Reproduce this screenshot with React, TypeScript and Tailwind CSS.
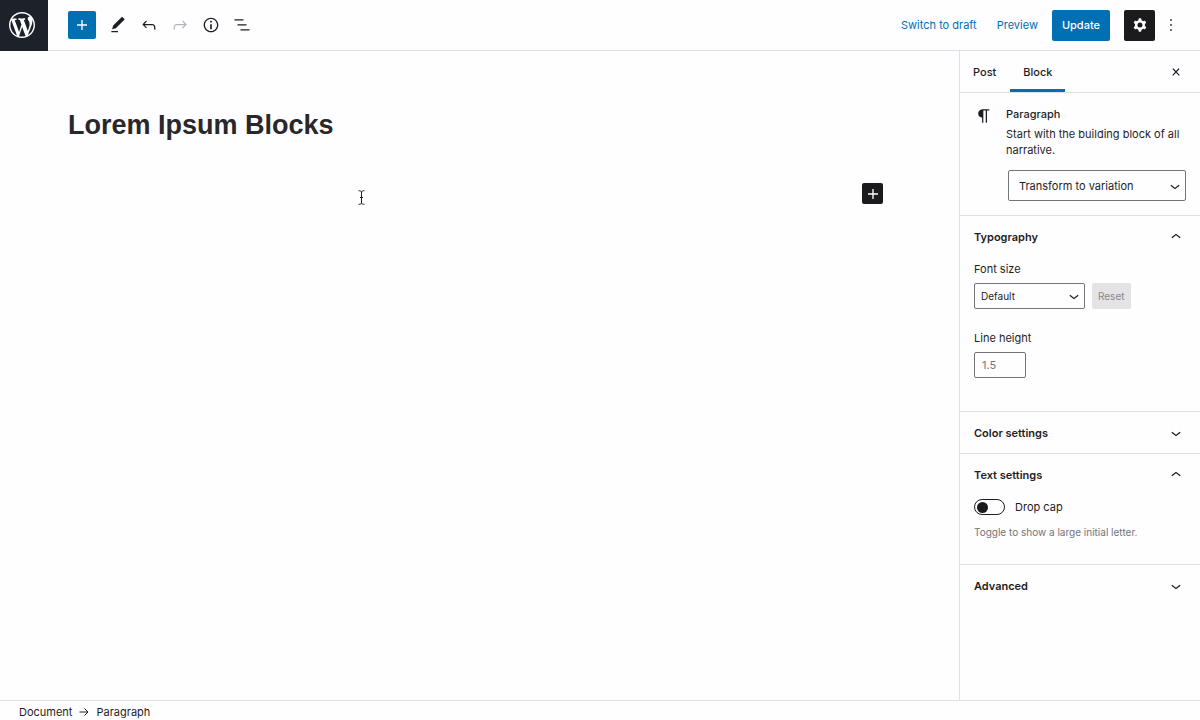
import { useState, type ReactNode } from "react";

const icons = {
  plus: "M18 11.2h-5.2V6h-1.6v5.2H6v1.6h5.2V18h1.6v-5.2H18z",
  edit: "M20.1 5.1L16.9 2 6.2 12.7l-1.3 4.4 4.5-1.3L20.1 5.1zM4 20.8h8v-1.5H4v1.5z",
  undo: "M18.3 11.7c-.6-.6-1.4-.9-2.3-.9H6.7l2.9-3.3-1.1-1-4.5 5L8.5 16l1-1-2.7-2.7H16c.5 0 .9.2 1.3.5 1 1 1 3.4 1 4.5v.3h1.5v-.2c0-1.5 0-4.3-1.5-5.7z",
  redo: "M15.6 6.5l-1.1 1 2.9 3.3H8c-.9 0-1.7.3-2.3.9-1.4 1.5-1.4 4.2-1.4 5.6v.2h1.5v-.3c0-1.1 0-3.5 1-4.5.3-.3.7-.5 1.3-.5h9.2L14.5 15l1.1 1.1 4.6-4.6-4.6-5z",
  info: "M12 3.2c-4.8 0-8.8 3.9-8.8 8.8 0 4.8 3.9 8.8 8.8 8.8 4.8 0 8.8-3.9 8.8-8.8 0-4.8-4-8.8-8.8-8.8zm0 16c-4 0-7.2-3.3-7.2-7.2C4.8 8 8 4.8 12 4.8s7.2 3.3 7.2 7.2c0 4-3.2 7.2-7.2 7.2zM11 17h2v-6h-2v6zm0-8h2V7h-2v2z",
  listView: "M13.8 5.2H3v1.5h10.8V5.2zm-3.6 12v1.5H21v-1.5H10.2zm7.2-6H6.6v1.5h10.8v-1.5z",
  cog: "M10.289 4.836A1 1 0 0111.275 4h1.306a1 1 0 01.987.836l.244 1.466c.787.26 1.503.679 2.108 1.218l1.393-.522a1 1 0 011.216.437l.653 1.13a1 1 0 01-.23 1.273l-1.148.944a6.025 6.025 0 010 2.435l1.149.946a1 1 0 01.23 1.272l-.653 1.13a1 1 0 01-1.216.437l-1.394-.522c-.605.54-1.32.958-2.108 1.218l-.244 1.466a1 1 0 01-.987.836h-1.306a1 1 0 01-.986-.836l-.244-1.466a5.995 5.995 0 01-2.108-1.218l-1.394.522a1 1 0 01-1.217-.436l-.653-1.131a1 1 0 01.23-1.272l1.149-.946a6.026 6.026 0 010-2.435l-1.148-.944a1 1 0 01-.23-1.272l.653-1.131a1 1 0 011.217-.437l1.393.522a5.994 5.994 0 012.108-1.218l.244-1.466zM14.929 12a3 3 0 11-6 0 3 3 0 016 0z",
  more: "M13 19h-2v-2h2v2zm0-6h-2v-2h2v2zm0-6h-2V5h2v2z",
  close: "M13 11.9l3.3-3.4-1.1-1-3.2 3.3-3.2-3.3-1.1 1 3.3 3.4-3.5 3.6 1 1L12 13l3.5 3.5 1-1z",
  paragraph: "M18.3 4H9.9v-.1l-.9.2c-2.3.4-4 2.4-4 4.8s1.7 4.4 4 4.8l.7.1V20h1.5V5.5h2.9V20h1.5V5.5h2.7V4z",
  down: "M17.5 11.6L12 16l-5.5-4.4.9-1.2L12 14l4.5-3.6 1 1.2z",
  up: "M6.5 12.4L12 8l5.5 4.4-.9 1.2L12 10l-4.5 3.6-1-1.2z",
};

function Icon({ name, className = "size-5" }: { name: keyof typeof icons; className?: string }) {
  return (
    <svg viewBox="0 0 24 24" fill="currentColor" aria-hidden="true" className={`shrink-0 ${className}`}>
      <path fillRule="evenodd" clipRule="evenodd" d={icons[name]} />
    </svg>
  );
}

function WordPressLogo() {
  return (
    <svg viewBox="0 0 20 20" fill="currentColor" aria-hidden="true" className="size-[26px]">
      <path d="M20 10c0-5.51-4.49-10-10-10C4.48 0 0 4.49 0 10c0 5.52 4.48 10 10 10 5.51 0 10-4.48 10-10zM7.78 15.37L4.37 6.22c.55-.02 1.17-.08 1.17-.08.5-.06.44-1.13-.06-1.11 0 0-1.45.11-2.37.11-.18 0-.37 0-.58-.01C4.12 2.69 6.87 1.11 10 1.11c2.33 0 4.45.87 6.05 2.34-.68-.11-1.65.39-1.65 1.58 0 .74.45 1.36.9 2.1.35.61.55 1.36.55 2.46 0 1.49-1.4 5-1.4 5l-3.03-8.37c.54-.02.82-.17.82-.17.5-.05.44-1.25-.06-1.22 0 0-1.44.12-2.38.12-.87 0-2.33-.12-2.33-.12-.5-.03-.56 1.2-.06 1.22l.92.08 1.26 3.41zM17.41 10c.24-.64.74-1.87.43-4.25.7 1.29 1.05 2.71 1.05 4.25 0 3.29-1.73 6.24-4.4 7.78.97-2.59 1.94-5.2 2.92-7.78zM6.1 18.09C3.12 16.65 1.11 13.53 1.11 10c0-1.3.23-2.48.72-3.59C3.25 10.3 4.67 14.2 6.1 18.09zm4.03-6.63l2.58 6.98c-.86.29-1.76.45-2.71.45-.79 0-1.57-.11-2.29-.33.81-2.38 1.62-4.74 2.42-7.1z" />
    </svg>
  );
}

function ToolButton({ name, label, disabled }: { name: keyof typeof icons; label: string; disabled?: boolean }) {
  return (
    <button
      type="button"
      aria-label={label}
      disabled={disabled}
      className="flex size-[31px] items-center justify-center disabled:text-[#b5b4b8]"
    >
      <Icon name={name} />
    </button>
  );
}

function Panel({ title, defaultOpen = false, last = false, children }: {
  title: string;
  defaultOpen?: boolean;
  last?: boolean;
  children?: ReactNode;
}) {
  const [open, setOpen] = useState(defaultOpen);
  return (
    <section className={last ? "" : "border-b border-[#e1e0e4]"}>
      <h2>
        <button
          type="button"
          aria-expanded={open}
          onClick={() => setOpen(!open)}
          className="flex h-[41px] w-full items-center justify-between px-3.5 font-semibold"
        >
          {title}
          <Icon name={open ? "up" : "down"} />
        </button>
      </h2>
      {open && children}
    </section>
  );
}

export default function App() {
  const [dropCap, setDropCap] = useState(false);
  return (
    <div className="flex min-h-screen flex-col bg-[#fefdff] font-['Inter','Liberation_Sans',sans-serif] text-[11px] leading-4 text-[#1e1e1e]">
      <header className="flex items-stretch">
        <a href="#posts" aria-label="View posts" className="flex w-12 items-center bg-[#1d2129] pb-0.5 pl-[9px] text-white">
          <WordPressLogo />
        </a>
        <div className="flex h-[51px] flex-1 items-center justify-between border-b border-[#e1e0e4] pr-[19px] pl-5">
          <div className="flex items-center">
            <button
              type="button"
              aria-label="Add block"
              className="mr-1.5 flex size-7 items-center justify-center rounded-xs bg-[#0070b2] text-white"
            >
              <Icon name="plus" />
            </button>
            <ToolButton name="edit" label="Tools" />
            <ToolButton name="undo" label="Undo" />
            <ToolButton name="redo" label="Redo" disabled />
            <ToolButton name="info" label="Details" />
            <ToolButton name="listView" label="List view" />
          </div>
          <div className="flex items-center">
            <button type="button" className="px-2.5 text-[#0070b2]">Switch to draft</button>
            <button type="button" className="px-2.5 text-[#0070b2]">Preview</button>
            <button type="button" className="ml-1 h-[31px] rounded-xs bg-[#0070b2] px-2.5 font-medium text-white">Update</button>
            <button
              type="button"
              aria-label="Settings"
              className="ml-3.5 flex size-[31px] items-center justify-center rounded-xs bg-[#1b1a1c] text-white"
            >
              <Icon name="cog" />
            </button>
            <button type="button" aria-label="Options" className="ml-1.5 flex h-[31px] items-center justify-center">
              <Icon name="more" />
            </button>
          </div>
        </div>
      </header>

      <div className="flex flex-1">
        <main className="relative min-w-0 flex-1 pt-14 pr-[76px] pl-[68px]">
          <h1 className="font-['Liberation_Sans',sans-serif] text-[27px] leading-9 font-bold text-[#28282b]">
            Lorem Ipsum Blocks
          </h1>
          <div className="mt-10 flex justify-end">
            <button
              type="button"
              aria-label="Add block"
              className="flex size-[21px] items-center justify-center rounded-xs bg-[#1b1a1c] text-white"
            >
              <Icon name="plus" />
            </button>
          </div>
          <svg
            viewBox="0 0 7 15"
            aria-hidden="true"
            className="pointer-events-none absolute top-[139px] left-[358px] h-[15px] w-[7px] fill-none stroke-[#1e1e1e]"
          >
            <path d="M.5 .7C2 .7 3.5 1 3.5 2.2C3.5 1 5 .7 6.5 .7M3.5 2V13M.5 14.3C2 14.3 3.5 14 3.5 12.8C3.5 14 5 14.3 6.5 14.3M2 7.5H5" />
          </svg>
        </main>

        <aside className="w-[241px] shrink-0 border-l border-[#e1e0e4]">
          <div className="flex h-[42px] items-stretch border-b border-[#e1e0e4] pr-3.5 font-medium">
            <button type="button" className="pr-3.5 pl-[13px]">Post</button>
            <button type="button" className="border-b-3 border-[#0070b2] px-[13px] pt-[3px]">Block</button>
            <button type="button" aria-label="Close settings" className="ml-auto">
              <Icon name="close" />
            </button>
          </div>

          <div className="flex gap-3 border-b border-[#e1e0e4] px-3.5 pt-[13px] pb-3.5">
            <Icon name="paragraph" />
            <div className="flex-1">
              <h2 className="font-medium">Paragraph</h2>
              <p className="mt-1">Start with the building block of all narrative.</p>
              <div className="relative mt-3 ml-0.5">
                <select
                  aria-label="Transform to variation"
                  className="h-[31px] w-full appearance-none rounded-xs border border-[#757478] px-2.5"
                >
                  <option>Transform to variation</option>
                </select>
                <Icon name="down" className="pointer-events-none absolute top-1.5 right-px size-5" />
              </div>
            </div>
          </div>

          <Panel title="Typography" defaultOpen>
            <div className="px-3.5 pt-1 pb-[33px]">
              <label htmlFor="font-size" className="block">Font size</label>
              <div className="mt-1.5 flex gap-[7px]">
                <div className="relative w-[111px]">
                  <select
                    id="font-size"
                    className="h-[26px] w-full appearance-none rounded-xs border border-[#757478] px-1.5 text-[10px]"
                  >
                    <option>Default</option>
                  </select>
                  <Icon name="down" className="pointer-events-none absolute top-[3px] right-px size-5" />
                </div>
                <button type="button" disabled className="h-[26px] rounded-xs bg-[#e4e3e6] px-1.5 text-[10px] text-[#88878b]">
                  Reset
                </button>
              </div>
              <label htmlFor="line-height" className="mt-[21px] block">Line height</label>
              <input
                id="line-height"
                placeholder="1.5"
                className="mt-1.5 block h-[26px] w-13 rounded-xs border border-[#757478] px-[7px] placeholder:text-[#757478]"
              />
            </div>
          </Panel>
          <Panel title="Color settings" />
          <Panel title="Text settings" defaultOpen>
            <div className="px-3.5 pt-1 pb-6">
              <label className="flex items-center gap-2.5">
                <input
                  type="checkbox"
                  role="switch"
                  checked={dropCap}
                  onChange={(e) => setDropCap(e.target.checked)}
                  className="flex h-4 w-[31px] appearance-none items-center rounded-full border border-[#1e1e1e] px-0.5 before:size-[11px] before:rounded-full before:bg-[#1b1a1c] checked:justify-end"
                />
                Drop cap
              </label>
              <p className="mt-[9px] text-[10px] text-[#757478]">Toggle to show a large initial letter.</p>
            </div>
          </Panel>
          <Panel title="Advanced" last />
        </aside>
      </div>

      <footer className="h-5 border-t border-[#e1e0e4] px-[19px]">
        <nav aria-label="Block breadcrumb" className="flex items-center gap-[7px] pt-[3px]">
          <button type="button">Document</button>
          <svg viewBox="0 0 10 10" aria-hidden="true" className="size-2.5 fill-none stroke-[#1e1e1e]">
            <path d="M.5 5H9M5.5 1.5L9 5L5.5 8.5" />
          </svg>
          <button type="button">Paragraph</button>
        </nav>
      </footer>
    </div>
  );
}
